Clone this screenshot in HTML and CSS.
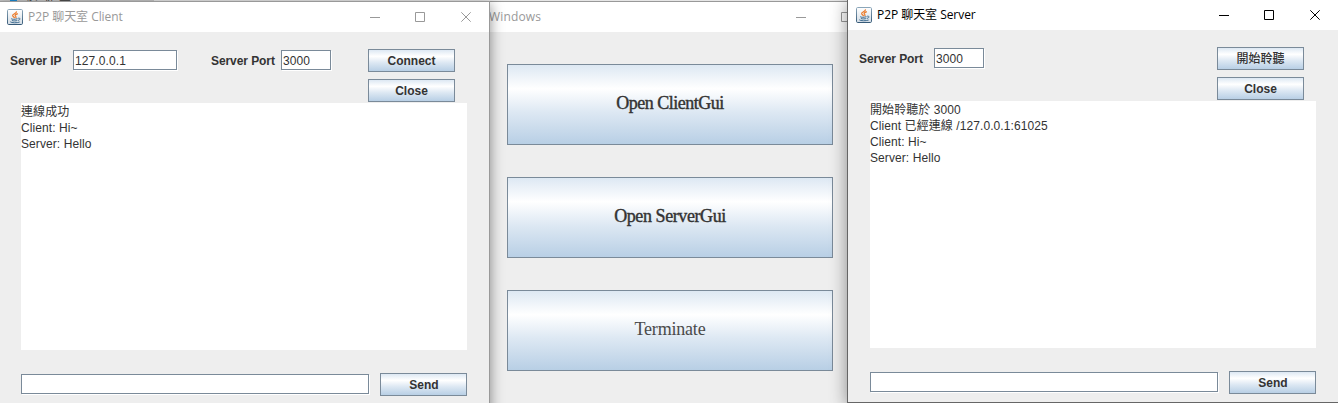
FILE: index.html
```html
<!DOCTYPE html>
<html lang="zh-Hant">
<head>
<meta charset="utf-8">
<title>P2P 聊天室</title>
<link rel="stylesheet" href="styles.css">
</head>
<body>
<svg class="defs" width="0" height="0">
  <defs>
    <linearGradient id="tile" x1="0" y1="0" x2="0" y2="1">
      <stop offset="0" stop-color="#fff"/><stop offset="1" stop-color="#d4dde5"/>
    </linearGradient>
    <linearGradient id="edge" x1="0" y1="0" x2="0" y2="1">
      <stop offset="0" stop-color="#8ba6b9"/><stop offset="1" stop-color="#365a78"/>
    </linearGradient>
    <symbol id="java" viewBox="0 0 16 16">
      <rect x=".5" y=".5" width="15" height="15" rx="1.2" fill="url(#tile)" stroke="url(#edge)"/>
      <path d="M9.500 2.300C10 4.500 5.200 4.800 5.600 6.700C5.900 7.700 7.200 8 7.500 9.200M10.800 4.600C7.800 5.700 7.600 6.500 8.700 7.400C9.300 8 9 8.700 8.600 9.200" fill="none" stroke="#ec7a28" stroke-width="1.200"/>
      <path d="M4.200 9.700C5 10.500 8 10.500 10.500 9.700M11.200 9.200C14 8.900 13.200 11 11 11.400M4.900 11.500C6.500 12.100 9 12 10.300 11.500M3.300 12.800C4.500 14 10 14.100 12.700 13" fill="none" stroke="#406d91" stroke-width="1"/>
    </symbol>
    <symbol id="min" viewBox="0 0 11 11"><path d="M0 5.500H10" stroke="currentColor"/></symbol>
    <symbol id="max" viewBox="0 0 11 11"><path d="M.5 .5H9.500V9.500H.5Z" fill="none" stroke="currentColor"/></symbol>
    <symbol id="close" viewBox="0 0 11 11"><path d="M.3 .3L9.700 9.700M9.700 .3L.3 9.700" stroke="currentColor"/></symbol>
  </defs>
</svg>
<main class="desktop">
  <div class="backdrop"><i class="backdrop-icon"></i><span class="backdrop-text">於聊室</span></div>

  <section class="window launcher">
    <header class="titlebar">
      <h1 class="title">Windows</h1>
      <div class="controls">
        <svg><use href="#min"/></svg><svg><use href="#max"/></svg>
      </div>
    </header>
    <div class="menu">
      <button class="btn big">Open ClientGui</button>
      <button class="btn big server-open">Open ServerGui</button>
      <button class="btn big light">Terminate</button>
    </div>
  </section>

  <section class="window client">
    <header class="titlebar">
      <svg class="logo"><use href="#java"/></svg>
      <h1 class="title">P2P 聊天室 Client</h1>
      <div class="controls">
        <svg><use href="#min"/></svg><svg><use href="#max"/></svg><svg><use href="#close"/></svg>
      </div>
    </header>
    <div class="body">
      <div class="top">
        <label class="label ip-label">Server IP</label>
        <div class="field ip">127.0.0.1</div>
        <label class="label port-label">Server Port</label>
        <div class="field port">3000</div>
        <div class="actions">
          <button class="btn">Connect</button>
          <button class="btn">Close</button>
        </div>
      </div>
      <div class="log">
        <div>連線成功</div>
        <div>Client: Hi~</div>
        <div>Server: Hello</div>
      </div>
      <div class="compose"><div class="field message"></div><button class="btn send">Send</button></div>
    </div>
  </section>

  <section class="window server">
    <header class="titlebar">
      <svg class="logo"><use href="#java"/></svg>
      <h1 class="title">P2P 聊天室 Server</h1>
      <div class="controls">
        <svg><use href="#min"/></svg><svg><use href="#max"/></svg><svg><use href="#close"/></svg>
      </div>
    </header>
    <div class="body">
      <div class="top">
        <label class="label listen-label">Server Port</label>
        <div class="field port">3000</div>
        <div class="actions">
          <button class="btn listen">開始聆聽</button>
          <button class="btn">Close</button>
        </div>
      </div>
      <div class="log">
        <div>開始聆聽於 3000</div>
        <div>Client 已經連線 /127.0.0.1:61025</div>
        <div>Client: Hi~</div>
        <div>Server: Hello</div>
      </div>
      <div class="compose"><div class="field message"></div><button class="btn send">Send</button></div>
    </div>
  </section>
</main>
</body>
</html>
```
FILE: styles.css
```css
* { box-sizing: border-box; }
body { margin: 0; overflow: hidden; font: 12px/16px "Liberation Sans", "Noto Sans CJK TC", sans-serif; color: #333; }
.defs { position: absolute; }
.desktop { position: relative; width: 1338px; height: 403px; overflow: hidden; background: #e6e6e6; }
.backdrop { display: flex; width: 154px; height: 2px; overflow: hidden; background: #c4c4c4; }
.backdrop-icon { width: 7px; height: 2px; margin-left: 10px; background: #1a8ad4; }
.backdrop-text { margin: -10px 0 0 10px; font-size: 12px; line-height: 12px; letter-spacing: 4px; }

.window { position: absolute; background: #eee; border: 1px solid #999; }
.launcher { left: 420px; top: 1px; width: 470px; height: 420px; }
.client { left: -1px; top: 1px; width: 491px; height: 420px; box-shadow: 1px 3px 12px rgba(0,0,0,.4); }
.server { left: 847px; top: -1px; width: 501px; height: 404px; border-color: #666; box-shadow: 0 3px 16px rgba(0,0,0,.42); }

.titlebar { display: flex; align-items: center; height: 30px; padding-left: 7px; background: #fff; color: #999; }
.server .titlebar { padding-left: 8px; color: #000; }
.logo { width: 16px; height: 16px; margin-right: 5px; }
.title { margin: 0; font: 12px/18px "Open Sans", "Noto Sans CJK TC", sans-serif; letter-spacing: -.05px; white-space: nowrap; }
.launcher .title { margin-left: 61px; letter-spacing: .15px; }
.controls { display: flex; gap: 35px; margin-left: auto; padding-right: 17px; }
.controls svg { width: 11px; height: 11px; }
.controls svg:first-child { margin: 0 -1px 0 1px; }
.server .controls { padding-right: 26px; }
.launcher .controls { padding-right: 37px; }

.menu { display: flex; flex-direction: column; gap: 32px; padding: 32px 0 0 86px; }
.btn { width: 87px; height: 23px; padding: 0; border: 1px solid #7a8a99; color: #333; font: bold 12px/20px "Liberation Sans", "Noto Sans CJK TC", sans-serif; background: linear-gradient(#dde8f3 0%, #fff 30%, #dde8f3 60%, #b8cfe5 100%); }
.btn.send { padding-left: 1px; }
.btn.listen { font-weight: 500; }
.btn.big { width: 326px; height: 81px; padding-bottom: 4px; font: 18px/22px "Liberation Serif", serif; -webkit-text-stroke: .4px #333; letter-spacing: -.5px; }
.btn.server-open { letter-spacing: -.42px; }
.btn.light { color: #4a4a4a; -webkit-text-stroke: 0; letter-spacing: -.2px; }

.body { width: 490px; padding: 17px 0 0 10px; }
.top { display: flex; height: 54px; }
.label { padding-top: 4px; font-weight: bold; letter-spacing: -.08px; white-space: nowrap; }
.ip-label { width: 63px; }
.port-label { width: 70px; margin-left: 34px; }
.listen-label { width: 75px; }
.field { height: 20px; margin-top: 1px; padding: 1px 0 0 1px; border: 1px solid #7a8a99; background: #fff; box-shadow: 1px 1px 0 #fff; line-height: 18px; letter-spacing: .1px; }
.ip { width: 104px; }
.port { width: 50px; }
.actions { display: flex; flex-direction: column; gap: 7px; margin-left: auto; margin-right: 35px; }
.server .body { padding-left: 11px; }
.server .actions { margin-right: 34px; }
.log { width: 446px; height: 247px; margin-left: 11px; padding-top: 1px; background: #fff; letter-spacing: .08px; }
.log div { height: 16px; white-space: nowrap; }
.compose { display: flex; gap: 11px; margin: 23px 0 0 11px; }
.message { width: 348px; }
```
